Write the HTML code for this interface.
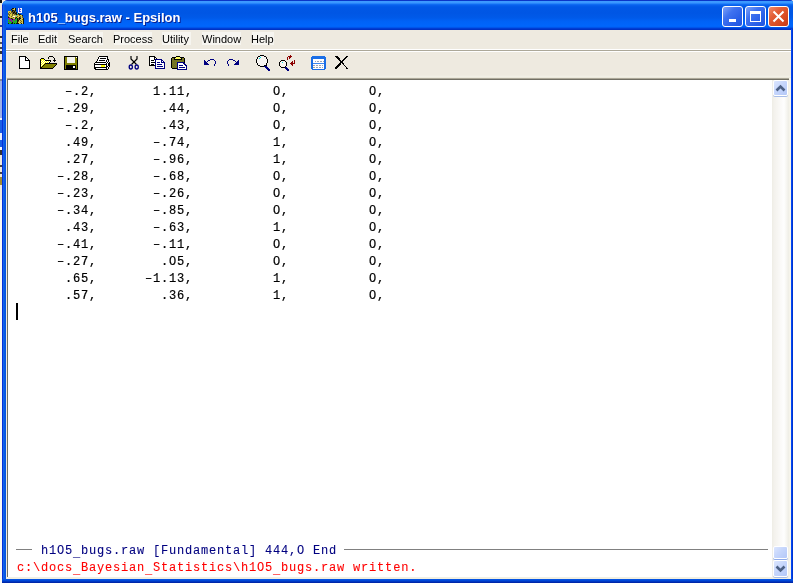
<!DOCTYPE html>
<html><head><meta charset="utf-8">
<style>
*{margin:0;padding:0;box-sizing:border-box}
html,body{width:793px;height:583px;overflow:hidden;background:#f2efe4;position:relative}
.a{position:absolute}
#desk{left:0;top:0;width:2px;height:583px;background:linear-gradient(180deg,#111 0px,#111 3px,#efe9dc 3px,#efe9dc 16px,#333 16px,#333 18px,#efe9dc 18px,#efe9dc 25px,#2040a0 25px,#2040a0 27px,#efe9dc 27px,#efe9dc 36px,#333 36px,#333 38px,#efe9dc 38px,#efe9dc 42px,#555 42px,#555 44px,#efe9dc 44px,#efe9dc 47px,#444 47px,#444 49px,#efe9dc 49px,#efe9dc 51px,#333 51px,#333 54px,#efe9dc 54px,#efe9dc 60px,#444 60px,#444 62px,#f2eee4 62px,#f2eee4 79px,#8088a0 79px,#8088a0 81px,#9cb0e8 81px,#9cb0e8 118px,#f8f8f8 118px,#f8f8f8 120px,#1a5fe6 120px,#1a5fe6 133px,#e8eefc 133px,#e8eefc 140px,#1a5fe6 140px,#1a5fe6 147px,#f8f8f8 147px,#f8f8f8 150px,#333 150px,#333 155px,#efe9dc 155px,#efe9dc 165px,#444 165px,#444 167px,#efe9dc 167px,#efe9dc 172px,#444 172px,#444 174px,#efe9dc 174px,#efe9dc 177px,#a08a30 177px,#a08a30 185px,#efe9dc 185px,#efe9dc 200px,#fafaf6 200px,#fafaf6 583px)}
#win{left:2px;top:0;width:794px;height:583px;background:#0054e3;border-radius:6px 7px 0 0}
#title{left:2px;top:0;width:794px;height:30px;border-radius:6px 7px 0 0;
 background:linear-gradient(180deg,#0a36c8 0px,#0a36c8 1px,#3d9bff 1px,#3a96ff 3px,#1474f6 4px,#0862ee 5px,#0058e6 7px,#0056e4 13px,#005ae9 18px,#0062f6 21px,#0066fc 26px,#0062f6 27px,#0048e0 28px,#0034c8 29px,#0030c0 30px)}
#ttext{left:28px;top:10px;font:bold 13px "Liberation Sans",sans-serif;color:#fff;text-shadow:1px 1px 0 #0a1f8f;white-space:nowrap}
#lb{left:2px;top:5px;width:4px;height:578px;background:linear-gradient(90deg,#0831d9 0,#0831d9 1px,#166aee 1px,#0855dd 3px,#0058ee 4px)}
#lcl{left:6px;top:30px;width:1px;height:549px;background:#eeeae0}
#bb{left:2px;top:579px;width:794px;height:4px;background:linear-gradient(180deg,#0855dd 0,#0050e6 1px,#0030b5 3px,#001ea0 4px)}
#rb{left:791px;top:29px;width:4px;height:554px;background:linear-gradient(90deg,#0048f4 0,#0048f4 1px,#0038d8 1px,#0030c8 2px,#00138c 4px)}
#menu{left:6px;top:30px;width:785px;height:19px;background:#eeeae0;font:11px "Liberation Sans",sans-serif;color:#000}
#mtext{left:6px;top:30px;width:785px;height:19px;font:11px "Liberation Sans",sans-serif;color:#000}
#mtext span{position:absolute;top:3px}
.mhl{top:32px;height:13px;background:#f6f5f0}
#sep{left:6px;top:49px;width:785px;height:3px;background:linear-gradient(180deg,#fff 0,#fff 1px,#aca899 1px,#aca899 2px,#fff 2px)}
#tool{left:6px;top:52px;width:785px;height:27px;background:linear-gradient(180deg,#eeeae0 0,#eeeae0 23px,#f3f1e8 25px,#e5e2d2 26px)}
#edtop{left:7px;top:78px;width:782px;height:2px;background:linear-gradient(180deg,#aca899 0,#aca899 1px,#716f64 1px,#716f64 2px)}
#edl2{left:7px;top:79px;width:1px;height:499px;background:#716f64}
#edit{left:8px;top:80px;width:764px;height:497px;background:#fff}
#botline{left:7px;top:577px;width:783px;height:2px;background:#f1efe2}
#rline{left:789px;top:78px;width:2px;height:501px;background:#f5f3ea}
pre{position:absolute;left:16.5px;top:84px;font:12px/17px "Liberation Mono",monospace;letter-spacing:0.8px;color:#000}
#cursor{left:16px;top:303px;width:2px;height:17px;background:#000}
.mono{font:12px/17px "Liberation Mono",monospace;letter-spacing:0.8px;white-space:pre}
#stat{left:16.5px;top:543px;color:#000080}
#msg{left:16.5px;top:560px;color:#ff0000}
#sl1{left:16px;top:549px;width:16px;height:1px;background:#808080}
#sl2{left:344px;top:549px;width:424px;height:1px;background:#808080}
#sb{left:772px;top:80px;width:17px;height:497px;background:linear-gradient(90deg,#eeede5 0,#f3f1ec 2px,#fefefe 12px,#f5f4ef 15px,#eeede5 17px)}
.sbtn{position:absolute;left:1px;width:15px;height:16px;border-radius:2px;border:1px solid #fff;background:linear-gradient(135deg,#dce6fe 0,#c6d6fc 45%,#b4c8f8 100%);box-shadow:0 1px 0 #a8bde8}
.tb{position:absolute;top:6px;width:21px;height:21px;border:1px solid #fff;border-radius:3px}
.mn{background:linear-gradient(135deg,#7fa3f8 0,#3f72f0 35%,#2a5fe8 70%,#1f55e0 100%)}
.cl{background:linear-gradient(135deg,#f08a6a 0,#e35d36 35%,#d84a22 70%,#c43a18 100%)}
svg{position:absolute;overflow:visible}
#ttext,#mtext,pre,.mono{will-change:transform}
pre{-webkit-text-stroke:0.2px currentColor}
.mono{-webkit-text-stroke:0.1px currentColor}
.u{position:relative;top:2px}
</style></head><body>
<div id="desk" class="a"></div>
<div id="win" class="a"></div>
<div id="title" class="a"></div>
<svg style="left:8px;top:8px" width="16" height="16" viewBox="0 0 16 16" shape-rendering="crispEdges"><rect x="4" y="0" width="2" height="1" fill="#141408"/><rect x="6" y="0" width="1" height="1" fill="#d8c848"/><rect x="7" y="0" width="1" height="1" fill="#141408"/><rect x="10" y="0" width="1" height="1" fill="#f4f4ff"/><rect x="11" y="0" width="1" height="1" fill="#5a4ad8"/><rect x="12" y="0" width="2" height="1" fill="#f4f4ff"/><rect x="3" y="1" width="1" height="1" fill="#141408"/><rect x="4" y="1" width="1" height="1" fill="#6e6028"/><rect x="5" y="1" width="2" height="1" fill="#d8c848"/><rect x="7" y="1" width="1" height="1" fill="#141408"/><rect x="10" y="1" width="1" height="1" fill="#f4f4ff"/><rect x="11" y="1" width="2" height="1" fill="#5a4ad8"/><rect x="13" y="1" width="1" height="1" fill="#f4f4ff"/><rect x="2" y="2" width="1" height="1" fill="#6e6028"/><rect x="4" y="2" width="2" height="1" fill="#141408"/><rect x="6" y="2" width="1" height="1" fill="#6e6028"/><rect x="7" y="2" width="1" height="1" fill="#141408"/><rect x="10" y="2" width="1" height="1" fill="#f4f4ff"/><rect x="11" y="2" width="1" height="1" fill="#5a4ad8"/><rect x="12" y="2" width="2" height="1" fill="#f4f4ff"/><rect x="0" y="3" width="3" height="1" fill="#d8c848"/><rect x="3" y="3" width="1" height="1" fill="#6e6028"/><rect x="4" y="3" width="1" height="1" fill="#141408"/><rect x="5" y="3" width="1" height="1" fill="#6e6028"/><rect x="6" y="3" width="1" height="1" fill="#141408"/><rect x="7" y="3" width="1" height="1" fill="#6e6028"/><rect x="10" y="3" width="1" height="1" fill="#f4f4ff"/><rect x="11" y="3" width="2" height="1" fill="#5a4ad8"/><rect x="13" y="3" width="1" height="1" fill="#f4f4ff"/><rect x="0" y="4" width="1" height="1" fill="#d8c848"/><rect x="1" y="4" width="1" height="1" fill="#6e6028"/><rect x="2" y="4" width="1" height="1" fill="#d8c848"/><rect x="3" y="4" width="2" height="1" fill="#6e6028"/><rect x="5" y="4" width="2" height="1" fill="#141408"/><rect x="7" y="4" width="1" height="1" fill="#6e6028"/><rect x="8" y="4" width="1" height="1" fill="#141408"/><rect x="10" y="4" width="4" height="1" fill="#f4f4ff"/><rect x="0" y="5" width="1" height="1" fill="#6e6028"/><rect x="1" y="5" width="1" height="1" fill="#d8c848"/><rect x="2" y="5" width="1" height="1" fill="#6e6028"/><rect x="3" y="5" width="1" height="1" fill="#d8c848"/><rect x="4" y="5" width="1" height="1" fill="#6e6028"/><rect x="5" y="5" width="1" height="1" fill="#141408"/><rect x="6" y="5" width="1" height="1" fill="#6e6028"/><rect x="7" y="5" width="2" height="1" fill="#141408"/><rect x="9" y="5" width="1" height="1" fill="#20d0d0"/><rect x="10" y="5" width="1" height="1" fill="#141408"/><rect x="0" y="6" width="2" height="1" fill="#6e6028"/><rect x="2" y="6" width="2" height="1" fill="#d8c848"/><rect x="4" y="6" width="1" height="1" fill="#6e6028"/><rect x="5" y="6" width="1" height="1" fill="#d8c848"/><rect x="6" y="6" width="2" height="1" fill="#6e6028"/><rect x="8" y="6" width="1" height="1" fill="#141408"/><rect x="9" y="6" width="2" height="1" fill="#6e6028"/><rect x="11" y="6" width="2" height="1" fill="#141408"/><rect x="0" y="7" width="1" height="1" fill="#d8c848"/><rect x="1" y="7" width="1" height="1" fill="#6e6028"/><rect x="2" y="7" width="2" height="1" fill="#d8c848"/><rect x="4" y="7" width="1" height="1" fill="#6e6028"/><rect x="5" y="7" width="3" height="1" fill="#d8c848"/><rect x="8" y="7" width="1" height="1" fill="#20d0d0"/><rect x="9" y="7" width="2" height="1" fill="#d8c848"/><rect x="11" y="7" width="1" height="1" fill="#6e6028"/><rect x="12" y="7" width="2" height="1" fill="#d8c848"/><rect x="14" y="7" width="1" height="1" fill="#141408"/><rect x="0" y="8" width="1" height="1" fill="#6e6028"/><rect x="1" y="8" width="2" height="1" fill="#d8c848"/><rect x="3" y="8" width="1" height="1" fill="#6e6028"/><rect x="4" y="8" width="1" height="1" fill="#d8c848"/><rect x="5" y="8" width="2" height="1" fill="#f4f4ff"/><rect x="7" y="8" width="2" height="1" fill="#d8c848"/><rect x="9" y="8" width="1" height="1" fill="#6e6028"/><rect x="10" y="8" width="2" height="1" fill="#d8c848"/><rect x="12" y="8" width="1" height="1" fill="#6e6028"/><rect x="13" y="8" width="1" height="1" fill="#d8c848"/><rect x="14" y="8" width="1" height="1" fill="#6e6028"/><rect x="0" y="9" width="1" height="1" fill="#141408"/><rect x="1" y="9" width="1" height="1" fill="#6e6028"/><rect x="2" y="9" width="3" height="1" fill="#d8c848"/><rect x="5" y="9" width="1" height="1" fill="#6e6028"/><rect x="6" y="9" width="1" height="1" fill="#d8c848"/><rect x="7" y="9" width="1" height="1" fill="#6e6028"/><rect x="8" y="9" width="1" height="1" fill="#141408"/><rect x="9" y="9" width="2" height="1" fill="#d8c848"/><rect x="11" y="9" width="1" height="1" fill="#141408"/><rect x="12" y="9" width="1" height="1" fill="#6e6028"/><rect x="13" y="9" width="1" height="1" fill="#d8c848"/><rect x="14" y="9" width="1" height="1" fill="#6e6028"/><rect x="0" y="10" width="2" height="1" fill="#8a1a9a"/><rect x="2" y="10" width="1" height="1" fill="#6e6028"/><rect x="3" y="10" width="1" height="1" fill="#141408"/><rect x="4" y="10" width="1" height="1" fill="#6e6028"/><rect x="5" y="10" width="2" height="1" fill="#d8c848"/><rect x="7" y="10" width="1" height="1" fill="#141408"/><rect x="8" y="10" width="1" height="1" fill="#22b022"/><rect x="9" y="10" width="1" height="1" fill="#141408"/><rect x="10" y="10" width="1" height="1" fill="#6e6028"/><rect x="11" y="10" width="2" height="1" fill="#141408"/><rect x="13" y="10" width="2" height="1" fill="#d8c848"/><rect x="15" y="10" width="1" height="1" fill="#141408"/><rect x="0" y="11" width="1" height="1" fill="#22b022"/><rect x="1" y="11" width="3" height="1" fill="#8a1a9a"/><rect x="4" y="11" width="1" height="1" fill="#141408"/><rect x="5" y="11" width="2" height="1" fill="#8a1a9a"/><rect x="7" y="11" width="2" height="1" fill="#22b022"/><rect x="9" y="11" width="1" height="1" fill="#141408"/><rect x="10" y="11" width="1" height="1" fill="#6e6028"/><rect x="11" y="11" width="1" height="1" fill="#141408"/><rect x="12" y="11" width="2" height="1" fill="#d8c848"/><rect x="14" y="11" width="1" height="1" fill="#6e6028"/><rect x="15" y="11" width="1" height="1" fill="#141408"/><rect x="0" y="12" width="2" height="1" fill="#22b022"/><rect x="2" y="12" width="2" height="1" fill="#8a1a9a"/><rect x="4" y="12" width="2" height="1" fill="#22b022"/><rect x="6" y="12" width="1" height="1" fill="#8a1a9a"/><rect x="7" y="12" width="2" height="1" fill="#22b022"/><rect x="9" y="12" width="2" height="1" fill="#141408"/><rect x="11" y="12" width="1" height="1" fill="#d8c848"/><rect x="12" y="12" width="1" height="1" fill="#6e6028"/><rect x="13" y="12" width="2" height="1" fill="#d8c848"/><rect x="15" y="12" width="1" height="1" fill="#141408"/><rect x="0" y="13" width="1" height="1" fill="#22b022"/><rect x="1" y="13" width="1" height="1" fill="#8a1a9a"/><rect x="2" y="13" width="1" height="1" fill="#22b022"/><rect x="3" y="13" width="2" height="1" fill="#8a1a9a"/><rect x="5" y="13" width="4" height="1" fill="#22b022"/><rect x="9" y="13" width="1" height="1" fill="#141408"/><rect x="10" y="13" width="1" height="1" fill="#6e6028"/><rect x="11" y="13" width="2" height="1" fill="#d8c848"/><rect x="13" y="13" width="1" height="1" fill="#6e6028"/><rect x="14" y="13" width="1" height="1" fill="#d8c848"/><rect x="15" y="13" width="1" height="1" fill="#141408"/><rect x="0" y="14" width="4" height="1" fill="#22b022"/><rect x="4" y="14" width="1" height="1" fill="#141408"/><rect x="5" y="14" width="4" height="1" fill="#22b022"/><rect x="9" y="14" width="1" height="1" fill="#141408"/><rect x="10" y="14" width="2" height="1" fill="#d8c848"/><rect x="12" y="14" width="1" height="1" fill="#6e6028"/><rect x="13" y="14" width="2" height="1" fill="#d8c848"/><rect x="15" y="14" width="1" height="1" fill="#141408"/><rect x="0" y="15" width="1" height="1" fill="#141408"/><rect x="1" y="15" width="2" height="1" fill="#22b022"/><rect x="3" y="15" width="2" height="1" fill="#141408"/><rect x="5" y="15" width="1" height="1" fill="#22b022"/><rect x="6" y="15" width="1" height="1" fill="#141408"/><rect x="7" y="15" width="1" height="1" fill="#22b022"/><rect x="8" y="15" width="3" height="1" fill="#141408"/><rect x="11" y="15" width="2" height="1" fill="#d8c848"/><rect x="13" y="15" width="1" height="1" fill="#141408"/><rect x="14" y="15" width="1" height="1" fill="#d8c848"/><rect x="15" y="15" width="1" height="1" fill="#141408"/></svg>
<div id="ttext" class="a">h105_bugs.raw - Epsilon</div>
<div class="tb mn a" style="left:722px"><div class="a" style="left:6px;top:12px;width:7px;height:3px;background:#fff"></div></div>
<div class="tb mn a" style="left:745px"><div class="a" style="left:4px;top:4px;width:11px;height:11px;border:1px solid #fff;border-top:3px solid #fff"></div></div>
<div class="tb cl a" style="left:768px"><svg style="left:0;top:0" width="19" height="19" viewBox="0 0 19 19"><path d="M4.5 4.5L14.5 14.5M14.5 4.5L4.5 14.5" stroke="#fff" stroke-width="2"/></svg></div>
<div id="lb" class="a"></div>
<div id="lcl" class="a"></div>
<div id="rb" class="a"></div>
<div id="bb" class="a"></div>
<div id="menu" class="a"></div>
<div class="a mhl" style="left:11px;width:18px"></div><div class="a mhl" style="left:39px;width:19px"></div><div class="a mhl" style="left:69px;width:34px"></div><div class="a mhl" style="left:114px;width:38px"></div><div class="a mhl" style="left:162px;width:29px"></div><div class="a mhl" style="left:202px;width:39px"></div><div class="a mhl" style="left:252px;width:22px"></div>
<div id="mtext" class="a">
 <span style="left:5px">File</span><span style="left:32px">Edit</span><span style="left:62px">Search</span><span style="left:107px">Process</span><span style="left:156px">Utility</span><span style="left:196px">Window</span><span style="left:245px">Help</span>
</div>
<div id="sep" class="a"></div>
<div id="tool" class="a"></div>
<!-- toolbar icons -->
<svg style="left:0;top:0" width="793" height="80" viewBox="0 0 793 80" shape-rendering="crispEdges">
 <!-- new --><rect x="19" y="56" width="7" height="1" fill="#000"/><rect x="19" y="57" width="1" height="1" fill="#000"/><rect x="20" y="57" width="5" height="1" fill="#fff"/><rect x="25" y="57" width="2" height="1" fill="#000"/><rect x="19" y="58" width="1" height="1" fill="#000"/><rect x="20" y="58" width="5" height="1" fill="#fff"/><rect x="25" y="58" width="1" height="1" fill="#000"/><rect x="26" y="58" width="1" height="1" fill="#fff"/><rect x="27" y="58" width="1" height="1" fill="#000"/><rect x="19" y="59" width="1" height="1" fill="#000"/><rect x="20" y="59" width="5" height="1" fill="#fff"/><rect x="25" y="59" width="1" height="1" fill="#000"/><rect x="26" y="59" width="2" height="1" fill="#fff"/><rect x="28" y="59" width="1" height="1" fill="#000"/><rect x="19" y="60" width="1" height="1" fill="#000"/><rect x="20" y="60" width="5" height="1" fill="#fff"/><rect x="25" y="60" width="5" height="1" fill="#000"/><rect x="19" y="61" width="1" height="1" fill="#000"/><rect x="20" y="61" width="9" height="1" fill="#fff"/><rect x="29" y="61" width="1" height="1" fill="#000"/><rect x="19" y="62" width="1" height="1" fill="#000"/><rect x="20" y="62" width="9" height="1" fill="#fff"/><rect x="29" y="62" width="1" height="1" fill="#000"/><rect x="19" y="63" width="1" height="1" fill="#000"/><rect x="20" y="63" width="9" height="1" fill="#fff"/><rect x="29" y="63" width="1" height="1" fill="#000"/><rect x="19" y="64" width="1" height="1" fill="#000"/><rect x="20" y="64" width="9" height="1" fill="#fff"/><rect x="29" y="64" width="1" height="1" fill="#000"/><rect x="19" y="65" width="1" height="1" fill="#000"/><rect x="20" y="65" width="9" height="1" fill="#fff"/><rect x="29" y="65" width="1" height="1" fill="#000"/><rect x="19" y="66" width="1" height="1" fill="#000"/><rect x="20" y="66" width="9" height="1" fill="#fff"/><rect x="29" y="66" width="1" height="1" fill="#000"/><rect x="19" y="67" width="1" height="1" fill="#000"/><rect x="20" y="67" width="9" height="1" fill="#fff"/><rect x="29" y="67" width="1" height="1" fill="#000"/><rect x="19" y="68" width="11" height="1" fill="#000"/>
 <!-- open --><rect x="49" y="56" width="4" height="1" fill="#000"/><rect x="48" y="57" width="1" height="1" fill="#000"/><rect x="53" y="57" width="1" height="1" fill="#000"/><rect x="41" y="58" width="3" height="1" fill="#000"/><rect x="48" y="58" width="1" height="1" fill="#000"/><rect x="54" y="58" width="1" height="1" fill="#000"/><rect x="40" y="59" width="1" height="1" fill="#000"/><rect x="41" y="59" width="3" height="1" fill="#ffff00"/><rect x="44" y="59" width="1" height="1" fill="#000"/><rect x="54" y="59" width="1" height="1" fill="#000"/><rect x="40" y="60" width="1" height="1" fill="#000"/><rect x="41" y="60" width="1" height="1" fill="#ffff00"/><rect x="42" y="60" width="1" height="1" fill="#fff"/><rect x="43" y="60" width="1" height="1" fill="#ffff00"/><rect x="44" y="60" width="1" height="1" fill="#fff"/><rect x="45" y="60" width="6" height="1" fill="#000"/><rect x="53" y="60" width="3" height="1" fill="#000"/><rect x="40" y="61" width="1" height="1" fill="#000"/><rect x="41" y="61" width="1" height="1" fill="#fff"/><rect x="42" y="61" width="1" height="1" fill="#ffff00"/><rect x="43" y="61" width="1" height="1" fill="#fff"/><rect x="44" y="61" width="1" height="1" fill="#ffff00"/><rect x="45" y="61" width="1" height="1" fill="#fff"/><rect x="46" y="61" width="1" height="1" fill="#ffff00"/><rect x="47" y="61" width="1" height="1" fill="#fff"/><rect x="48" y="61" width="1" height="1" fill="#ffff00"/><rect x="49" y="61" width="1" height="1" fill="#fff"/><rect x="50" y="61" width="1" height="1" fill="#000"/><rect x="54" y="61" width="1" height="1" fill="#000"/><rect x="40" y="62" width="1" height="1" fill="#000"/><rect x="41" y="62" width="1" height="1" fill="#ffff00"/><rect x="42" y="62" width="1" height="1" fill="#fff"/><rect x="43" y="62" width="1" height="1" fill="#ffff00"/><rect x="44" y="62" width="1" height="1" fill="#fff"/><rect x="45" y="62" width="1" height="1" fill="#ffff00"/><rect x="46" y="62" width="1" height="1" fill="#fff"/><rect x="47" y="62" width="1" height="1" fill="#ffff00"/><rect x="48" y="62" width="1" height="1" fill="#fff"/><rect x="49" y="62" width="1" height="1" fill="#000"/><rect x="40" y="63" width="1" height="1" fill="#000"/><rect x="41" y="63" width="1" height="1" fill="#fff"/><rect x="42" y="63" width="1" height="1" fill="#ffff00"/><rect x="43" y="63" width="1" height="1" fill="#fff"/><rect x="44" y="63" width="1" height="1" fill="#ffff00"/><rect x="45" y="63" width="12" height="1" fill="#000"/><rect x="40" y="64" width="1" height="1" fill="#000"/><rect x="41" y="64" width="1" height="1" fill="#ffff00"/><rect x="42" y="64" width="1" height="1" fill="#fff"/><rect x="43" y="64" width="1" height="1" fill="#ffff00"/><rect x="44" y="64" width="1" height="1" fill="#000"/><rect x="45" y="64" width="11" height="1" fill="#808000"/><rect x="56" y="64" width="1" height="1" fill="#000"/><rect x="40" y="65" width="1" height="1" fill="#000"/><rect x="41" y="65" width="1" height="1" fill="#fff"/><rect x="42" y="65" width="1" height="1" fill="#ffff00"/><rect x="43" y="65" width="1" height="1" fill="#000"/><rect x="44" y="65" width="11" height="1" fill="#808000"/><rect x="55" y="65" width="1" height="1" fill="#000"/><rect x="40" y="66" width="1" height="1" fill="#000"/><rect x="41" y="66" width="1" height="1" fill="#ffff00"/><rect x="42" y="66" width="1" height="1" fill="#000"/><rect x="43" y="66" width="11" height="1" fill="#808000"/><rect x="54" y="66" width="1" height="1" fill="#000"/><rect x="40" y="67" width="2" height="1" fill="#000"/><rect x="42" y="67" width="11" height="1" fill="#808000"/><rect x="53" y="67" width="1" height="1" fill="#000"/><rect x="40" y="68" width="13" height="1" fill="#000"/>
 <!-- save -->
 <rect x="64.5" y="56.5" width="13" height="13" fill="#808000" stroke="#000"/>
 <rect x="67" y="57" width="8" height="6" fill="#f4f4ec"/>
 <rect x="66" y="65" width="10" height="4" fill="#000"/>
 <rect x="73" y="66" width="2" height="2" fill="#fff"/><rect x="76" y="57" width="1" height="1" fill="#fff"/>
 <!-- print --> <rect x="99" y="56" width="9" height="1" fill="#000"/> <rect x="98" y="57" width="1" height="1" fill="#000"/> <rect x="99" y="57" width="8" height="1" fill="#fff"/> <rect x="107" y="57" width="1" height="1" fill="#000"/> <rect x="98" y="58" width="1" height="1" fill="#000"/> <rect x="99" y="58" width="1" height="1" fill="#fff"/> <rect x="100" y="58" width="6" height="1" fill="#000"/> <rect x="106" y="58" width="1" height="1" fill="#fff"/> <rect x="107" y="58" width="1" height="1" fill="#000"/> <rect x="97" y="59" width="1" height="1" fill="#000"/> <rect x="98" y="59" width="9" height="1" fill="#fff"/> <rect x="107" y="59" width="2" height="1" fill="#000"/> <rect x="97" y="60" width="1" height="1" fill="#000"/> <rect x="98" y="60" width="1" height="1" fill="#fff"/> <rect x="99" y="60" width="6" height="1" fill="#000"/> <rect x="105" y="60" width="1" height="1" fill="#fff"/> <rect x="106" y="60" width="1" height="1" fill="#000"/> <rect x="107" y="60" width="1" height="1" fill="#fff"/> <rect x="108" y="60" width="1" height="1" fill="#000"/> <rect x="96" y="61" width="1" height="1" fill="#000"/> <rect x="97" y="61" width="9" height="1" fill="#fff"/> <rect x="106" y="61" width="1" height="1" fill="#000"/> <rect x="107" y="61" width="1" height="1" fill="#fff"/> <rect x="108" y="61" width="1" height="1" fill="#000"/> <rect x="109" y="61" width="1" height="1" fill="#fff"/> <rect x="95" y="62" width="11" height="1" fill="#000"/> <rect x="106" y="62" width="1" height="1" fill="#fff"/> <rect x="107" y="62" width="1" height="1" fill="#000"/> <rect x="108" y="62" width="1" height="1" fill="#fff"/> <rect x="109" y="62" width="1" height="1" fill="#000"/> <rect x="94" y="63" width="1" height="1" fill="#000"/> <rect x="95" y="63" width="11" height="1" fill="#fff"/> <rect x="106" y="63" width="1" height="1" fill="#000"/> <rect x="107" y="63" width="1" height="1" fill="#fff"/> <rect x="108" y="63" width="2" height="1" fill="#000"/> <rect x="94" y="64" width="13" height="1" fill="#000"/> <rect x="107" y="64" width="1" height="1" fill="#fff"/> <rect x="108" y="64" width="2" height="1" fill="#000"/> <rect x="94" y="65" width="1" height="1" fill="#000"/> <rect x="95" y="65" width="6" height="1" fill="#fff"/> <rect x="101" y="65" width="4" height="1" fill="#ffff00"/> <rect x="105" y="65" width="1" height="1" fill="#fff"/> <rect x="106" y="65" width="1" height="1" fill="#000"/> <rect x="107" y="65" width="1" height="1" fill="#fff"/> <rect x="108" y="65" width="2" height="1" fill="#000"/> <rect x="94" y="66" width="1" height="1" fill="#000"/> <rect x="95" y="66" width="6" height="1" fill="#fff"/> <rect x="101" y="66" width="4" height="1" fill="#ffff00"/> <rect x="105" y="66" width="1" height="1" fill="#fff"/> <rect x="106" y="66" width="2" height="1" fill="#000"/> <rect x="108" y="66" width="1" height="1" fill="#fff"/> <rect x="109" y="66" width="1" height="1" fill="#000"/> <rect x="94" y="67" width="13" height="1" fill="#000"/> <rect x="107" y="67" width="1" height="1" fill="#fff"/> <rect x="108" y="67" width="1" height="1" fill="#000"/> <rect x="94" y="68" width="2" height="1" fill="#000"/> <rect x="96" y="68" width="10" height="1" fill="#fff"/> <rect x="106" y="68" width="1" height="1" fill="#000"/> <rect x="107" y="68" width="1" height="1" fill="#fff"/> <rect x="108" y="68" width="1" height="1" fill="#000"/> <rect x="95" y="69" width="13" height="1" fill="#000"/>
 <!-- cut -->
 <path d="M131 56V59L136.5 64.5M137 56V59L131.5 64.5" fill="none" stroke="#000" stroke-width="1.2" shape-rendering="auto"/>
 <ellipse cx="130.8" cy="67" rx="1.6" ry="2" fill="none" stroke="#000080" stroke-width="1.3" shape-rendering="auto"/>
 <ellipse cx="136.7" cy="67" rx="1.6" ry="2" fill="none" stroke="#000080" stroke-width="1.3" shape-rendering="auto"/>
 <!-- copy --><rect x="149" y="56" width="6" height="1" fill="#000"/><rect x="149" y="57" width="1" height="1" fill="#000"/><rect x="150" y="57" width="4" height="1" fill="#fff"/><rect x="154" y="57" width="2" height="1" fill="#000"/><rect x="149" y="58" width="1" height="1" fill="#000"/><rect x="150" y="58" width="4" height="1" fill="#fff"/><rect x="154" y="58" width="1" height="1" fill="#000"/><rect x="155" y="58" width="1" height="1" fill="#fff"/><rect x="156" y="58" width="1" height="1" fill="#000"/><rect x="149" y="59" width="1" height="1" fill="#000"/><rect x="150" y="59" width="4" height="1" fill="#fff"/><rect x="154" y="59" width="1" height="1" fill="#000"/><rect x="155" y="59" width="7" height="1" fill="#000080"/><rect x="149" y="60" width="1" height="1" fill="#000"/><rect x="150" y="60" width="1" height="1" fill="#fff"/><rect x="151" y="60" width="3" height="1" fill="#000"/><rect x="154" y="60" width="1" height="1" fill="#fff"/><rect x="155" y="60" width="1" height="1" fill="#000080"/><rect x="156" y="60" width="5" height="1" fill="#fff"/><rect x="161" y="60" width="2" height="1" fill="#000080"/><rect x="149" y="61" width="1" height="1" fill="#000"/><rect x="150" y="61" width="5" height="1" fill="#fff"/><rect x="155" y="61" width="1" height="1" fill="#000080"/><rect x="156" y="61" width="5" height="1" fill="#fff"/><rect x="161" y="61" width="1" height="1" fill="#000080"/><rect x="162" y="61" width="1" height="1" fill="#fff"/><rect x="163" y="61" width="1" height="1" fill="#000080"/><rect x="149" y="62" width="1" height="1" fill="#000"/><rect x="150" y="62" width="1" height="1" fill="#fff"/><rect x="151" y="62" width="4" height="1" fill="#000"/><rect x="155" y="62" width="1" height="1" fill="#000080"/><rect x="156" y="62" width="1" height="1" fill="#fff"/><rect x="157" y="62" width="3" height="1" fill="#000080"/><rect x="160" y="62" width="1" height="1" fill="#fff"/><rect x="161" y="62" width="4" height="1" fill="#000080"/><rect x="149" y="63" width="1" height="1" fill="#000"/><rect x="150" y="63" width="5" height="1" fill="#fff"/><rect x="155" y="63" width="1" height="1" fill="#000080"/><rect x="156" y="63" width="8" height="1" fill="#fff"/><rect x="164" y="63" width="1" height="1" fill="#000080"/><rect x="149" y="64" width="1" height="1" fill="#000"/><rect x="150" y="64" width="1" height="1" fill="#fff"/><rect x="151" y="64" width="3" height="1" fill="#000"/><rect x="154" y="64" width="1" height="1" fill="#fff"/><rect x="155" y="64" width="1" height="1" fill="#000080"/><rect x="156" y="64" width="1" height="1" fill="#fff"/><rect x="157" y="64" width="5" height="1" fill="#000080"/><rect x="162" y="64" width="2" height="1" fill="#fff"/><rect x="164" y="64" width="1" height="1" fill="#000080"/><rect x="149" y="65" width="6" height="1" fill="#000"/><rect x="155" y="65" width="1" height="1" fill="#000080"/><rect x="156" y="65" width="8" height="1" fill="#fff"/><rect x="164" y="65" width="1" height="1" fill="#000080"/><rect x="155" y="66" width="1" height="1" fill="#000080"/><rect x="156" y="66" width="1" height="1" fill="#fff"/><rect x="157" y="66" width="6" height="1" fill="#000080"/><rect x="163" y="66" width="1" height="1" fill="#fff"/><rect x="164" y="66" width="1" height="1" fill="#000080"/><rect x="155" y="67" width="1" height="1" fill="#000080"/><rect x="156" y="67" width="8" height="1" fill="#fff"/><rect x="164" y="67" width="1" height="1" fill="#000080"/><rect x="155" y="68" width="10" height="1" fill="#000080"/>
 <!-- paste --><rect x="176" y="56" width="4" height="1" fill="#000"/><rect x="172" y="57" width="4" height="1" fill="#000"/><rect x="176" y="57" width="4" height="1" fill="#ffff60"/><rect x="180" y="57" width="4" height="1" fill="#000"/><rect x="171" y="58" width="1" height="1" fill="#000"/><rect x="172" y="58" width="1" height="1" fill="#6a6a4a"/><rect x="173" y="58" width="1" height="1" fill="#808000"/><rect x="174" y="58" width="1" height="1" fill="#000"/><rect x="175" y="58" width="6" height="1" fill="#ffff60"/><rect x="181" y="58" width="1" height="1" fill="#000"/><rect x="182" y="58" width="1" height="1" fill="#6a6a4a"/><rect x="183" y="58" width="1" height="1" fill="#808000"/><rect x="184" y="58" width="1" height="1" fill="#000"/><rect x="171" y="59" width="1" height="1" fill="#000"/><rect x="172" y="59" width="1" height="1" fill="#808000"/><rect x="173" y="59" width="1" height="1" fill="#6a6a4a"/><rect x="174" y="59" width="8" height="1" fill="#000"/><rect x="182" y="59" width="1" height="1" fill="#808000"/><rect x="183" y="59" width="1" height="1" fill="#6a6a4a"/><rect x="184" y="59" width="1" height="1" fill="#000"/><rect x="171" y="60" width="1" height="1" fill="#000"/><rect x="172" y="60" width="1" height="1" fill="#6a6a4a"/><rect x="173" y="60" width="1" height="1" fill="#808000"/><rect x="174" y="60" width="1" height="1" fill="#6a6a4a"/><rect x="175" y="60" width="1" height="1" fill="#808000"/><rect x="176" y="60" width="1" height="1" fill="#6a6a4a"/><rect x="177" y="60" width="1" height="1" fill="#808000"/><rect x="178" y="60" width="1" height="1" fill="#6a6a4a"/><rect x="179" y="60" width="1" height="1" fill="#808000"/><rect x="180" y="60" width="1" height="1" fill="#6a6a4a"/><rect x="181" y="60" width="1" height="1" fill="#808000"/><rect x="182" y="60" width="1" height="1" fill="#6a6a4a"/><rect x="183" y="60" width="1" height="1" fill="#808000"/><rect x="184" y="60" width="1" height="1" fill="#000"/><rect x="171" y="61" width="1" height="1" fill="#000"/><rect x="172" y="61" width="1" height="1" fill="#808000"/><rect x="173" y="61" width="1" height="1" fill="#6a6a4a"/><rect x="174" y="61" width="1" height="1" fill="#808000"/><rect x="175" y="61" width="1" height="1" fill="#6a6a4a"/><rect x="176" y="61" width="1" height="1" fill="#808000"/><rect x="177" y="61" width="1" height="1" fill="#6a6a4a"/><rect x="178" y="61" width="1" height="1" fill="#808000"/><rect x="179" y="61" width="1" height="1" fill="#6a6a4a"/><rect x="180" y="61" width="1" height="1" fill="#808000"/><rect x="181" y="61" width="1" height="1" fill="#6a6a4a"/><rect x="182" y="61" width="1" height="1" fill="#808000"/><rect x="183" y="61" width="1" height="1" fill="#6a6a4a"/><rect x="184" y="61" width="1" height="1" fill="#000"/><rect x="171" y="62" width="1" height="1" fill="#000"/><rect x="172" y="62" width="1" height="1" fill="#6a6a4a"/><rect x="173" y="62" width="1" height="1" fill="#808000"/><rect x="174" y="62" width="1" height="1" fill="#6a6a4a"/><rect x="175" y="62" width="1" height="1" fill="#808000"/><rect x="176" y="62" width="1" height="1" fill="#6a6a4a"/><rect x="177" y="62" width="7" height="1" fill="#000080"/><rect x="184" y="62" width="1" height="1" fill="#000"/><rect x="171" y="63" width="1" height="1" fill="#000"/><rect x="172" y="63" width="1" height="1" fill="#808000"/><rect x="173" y="63" width="1" height="1" fill="#6a6a4a"/><rect x="174" y="63" width="1" height="1" fill="#808000"/><rect x="175" y="63" width="1" height="1" fill="#6a6a4a"/><rect x="176" y="63" width="1" height="1" fill="#808000"/><rect x="177" y="63" width="1" height="1" fill="#000080"/><rect x="178" y="63" width="5" height="1" fill="#fff"/><rect x="183" y="63" width="2" height="1" fill="#000080"/><rect x="171" y="64" width="1" height="1" fill="#000"/><rect x="172" y="64" width="1" height="1" fill="#6a6a4a"/><rect x="173" y="64" width="1" height="1" fill="#808000"/><rect x="174" y="64" width="1" height="1" fill="#6a6a4a"/><rect x="175" y="64" width="1" height="1" fill="#808000"/><rect x="176" y="64" width="1" height="1" fill="#6a6a4a"/><rect x="177" y="64" width="1" height="1" fill="#000080"/><rect x="178" y="64" width="6" height="1" fill="#fff"/><rect x="184" y="64" width="2" height="1" fill="#000080"/><rect x="171" y="65" width="1" height="1" fill="#000"/><rect x="172" y="65" width="1" height="1" fill="#808000"/><rect x="173" y="65" width="1" height="1" fill="#6a6a4a"/><rect x="174" y="65" width="1" height="1" fill="#808000"/><rect x="175" y="65" width="1" height="1" fill="#6a6a4a"/><rect x="176" y="65" width="1" height="1" fill="#808000"/><rect x="177" y="65" width="1" height="1" fill="#000080"/><rect x="178" y="65" width="1" height="1" fill="#fff"/><rect x="179" y="65" width="4" height="1" fill="#000080"/><rect x="183" y="65" width="2" height="1" fill="#fff"/><rect x="185" y="65" width="2" height="1" fill="#000080"/><rect x="171" y="66" width="1" height="1" fill="#000"/><rect x="172" y="66" width="1" height="1" fill="#6a6a4a"/><rect x="173" y="66" width="1" height="1" fill="#808000"/><rect x="174" y="66" width="1" height="1" fill="#6a6a4a"/><rect x="175" y="66" width="1" height="1" fill="#808000"/><rect x="176" y="66" width="1" height="1" fill="#6a6a4a"/><rect x="177" y="66" width="1" height="1" fill="#000080"/><rect x="178" y="66" width="8" height="1" fill="#fff"/><rect x="186" y="66" width="1" height="1" fill="#000080"/><rect x="171" y="67" width="1" height="1" fill="#000"/><rect x="172" y="67" width="1" height="1" fill="#808000"/><rect x="173" y="67" width="1" height="1" fill="#6a6a4a"/><rect x="174" y="67" width="1" height="1" fill="#808000"/><rect x="175" y="67" width="1" height="1" fill="#6a6a4a"/><rect x="176" y="67" width="1" height="1" fill="#808000"/><rect x="177" y="67" width="1" height="1" fill="#000080"/><rect x="178" y="67" width="1" height="1" fill="#fff"/><rect x="179" y="67" width="6" height="1" fill="#000080"/><rect x="185" y="67" width="1" height="1" fill="#fff"/><rect x="186" y="67" width="1" height="1" fill="#000080"/><rect x="172" y="68" width="5" height="1" fill="#000"/><rect x="177" y="68" width="1" height="1" fill="#000080"/><rect x="178" y="68" width="8" height="1" fill="#fff"/><rect x="186" y="68" width="1" height="1" fill="#000080"/><rect x="177" y="69" width="10" height="1" fill="#000080"/>
 <!-- undo --><rect x="210" y="59" width="4" height="1" fill="#000080"/><rect x="204" y="60" width="1" height="1" fill="#000080"/><rect x="208" y="60" width="2" height="1" fill="#000080"/><rect x="214" y="60" width="1" height="1" fill="#000080"/><rect x="204" y="61" width="2" height="1" fill="#000080"/><rect x="207" y="61" width="1" height="1" fill="#000080"/><rect x="215" y="61" width="1" height="1" fill="#000080"/><rect x="204" y="62" width="3" height="1" fill="#000080"/><rect x="215" y="62" width="1" height="1" fill="#000080"/><rect x="204" y="63" width="4" height="1" fill="#000080"/><rect x="215" y="63" width="1" height="1" fill="#000080"/><rect x="204" y="64" width="5" height="1" fill="#000080"/><rect x="214" y="64" width="1" height="1" fill="#000080"/><rect x="214" y="65" width="1" height="1" fill="#000080"/>
 <!-- redo --><rect x="229" y="59" width="4" height="1" fill="#000080"/><rect x="228" y="60" width="1" height="1" fill="#000080"/><rect x="233" y="60" width="2" height="1" fill="#000080"/><rect x="238" y="60" width="1" height="1" fill="#000080"/><rect x="227" y="61" width="1" height="1" fill="#000080"/><rect x="235" y="61" width="1" height="1" fill="#000080"/><rect x="237" y="61" width="2" height="1" fill="#000080"/><rect x="227" y="62" width="1" height="1" fill="#000080"/><rect x="236" y="62" width="3" height="1" fill="#000080"/><rect x="227" y="63" width="1" height="1" fill="#000080"/><rect x="235" y="63" width="4" height="1" fill="#000080"/><rect x="228" y="64" width="1" height="1" fill="#000080"/><rect x="234" y="64" width="5" height="1" fill="#000080"/><rect x="228" y="65" width="1" height="1" fill="#000080"/>
 <!-- find --><rect x="260" y="55" width="4" height="1" fill="#000"/><rect x="258" y="56" width="2" height="1" fill="#000"/><rect x="260" y="56" width="4" height="1" fill="#f7f5f2"/><rect x="264" y="56" width="2" height="1" fill="#000"/><rect x="257" y="57" width="1" height="1" fill="#000"/><rect x="258" y="57" width="2" height="1" fill="#f7f5f2"/><rect x="260" y="57" width="1" height="1" fill="#00e0e0"/><rect x="261" y="57" width="5" height="1" fill="#f7f5f2"/><rect x="266" y="57" width="1" height="1" fill="#000"/><rect x="257" y="58" width="1" height="1" fill="#000"/><rect x="258" y="58" width="1" height="1" fill="#f7f5f2"/><rect x="259" y="58" width="1" height="1" fill="#00e0e0"/><rect x="260" y="58" width="6" height="1" fill="#f7f5f2"/><rect x="266" y="58" width="1" height="1" fill="#000"/><rect x="256" y="59" width="1" height="1" fill="#000"/><rect x="257" y="59" width="10" height="1" fill="#f7f5f2"/><rect x="267" y="59" width="1" height="1" fill="#000"/><rect x="256" y="60" width="1" height="1" fill="#000"/><rect x="257" y="60" width="10" height="1" fill="#f7f5f2"/><rect x="267" y="60" width="1" height="1" fill="#000"/><rect x="256" y="61" width="1" height="1" fill="#000"/><rect x="257" y="61" width="10" height="1" fill="#f7f5f2"/><rect x="267" y="61" width="1" height="1" fill="#000"/><rect x="256" y="62" width="1" height="1" fill="#000"/><rect x="257" y="62" width="10" height="1" fill="#f7f5f2"/><rect x="267" y="62" width="1" height="1" fill="#000"/><rect x="257" y="63" width="1" height="1" fill="#000"/><rect x="258" y="63" width="8" height="1" fill="#f7f5f2"/><rect x="266" y="63" width="1" height="1" fill="#000"/><rect x="257" y="64" width="1" height="1" fill="#000"/><rect x="258" y="64" width="8" height="1" fill="#f7f5f2"/><rect x="266" y="64" width="1" height="1" fill="#000"/><rect x="258" y="65" width="2" height="1" fill="#000"/><rect x="260" y="65" width="4" height="1" fill="#f7f5f2"/><rect x="264" y="65" width="3" height="1" fill="#000"/><rect x="260" y="66" width="4" height="1" fill="#000"/><rect x="264" y="66" width="3" height="1" fill="#000080"/><rect x="265" y="67" width="3" height="1" fill="#000080"/><rect x="266" y="68" width="3" height="1" fill="#000080"/><rect x="267" y="69" width="3" height="1" fill="#000080"/><rect x="268" y="70" width="2" height="1" fill="#000080"/>
 <!-- replace --><rect x="290" y="55" width="1" height="1" fill="#8b0000"/><rect x="288" y="56" width="4" height="1" fill="#8b0000"/><rect x="287" y="57" width="1" height="1" fill="#8b0000"/><rect x="289" y="57" width="2" height="1" fill="#8b0000"/><rect x="287" y="58" width="1" height="1" fill="#8b0000"/><rect x="289" y="58" width="1" height="1" fill="#8b0000"/><rect x="287" y="59" width="1" height="1" fill="#8b0000"/><rect x="281" y="60" width="4" height="1" fill="#000"/><rect x="294" y="60" width="1" height="1" fill="#8b0000"/><rect x="280" y="61" width="1" height="1" fill="#000"/><rect x="281" y="61" width="4" height="1" fill="#f7f5f2"/><rect x="285" y="61" width="1" height="1" fill="#000"/><rect x="292" y="61" width="1" height="1" fill="#8b0000"/><rect x="294" y="61" width="1" height="1" fill="#8b0000"/><rect x="279" y="62" width="1" height="1" fill="#000"/><rect x="280" y="62" width="2" height="1" fill="#f7f5f2"/><rect x="282" y="62" width="1" height="1" fill="#00e0e0"/><rect x="283" y="62" width="3" height="1" fill="#f7f5f2"/><rect x="286" y="62" width="1" height="1" fill="#000"/><rect x="291" y="62" width="2" height="1" fill="#8b0000"/><rect x="294" y="62" width="1" height="1" fill="#8b0000"/><rect x="279" y="63" width="1" height="1" fill="#000"/><rect x="280" y="63" width="6" height="1" fill="#f7f5f2"/><rect x="286" y="63" width="1" height="1" fill="#000"/><rect x="290" y="63" width="5" height="1" fill="#8b0000"/><rect x="279" y="64" width="1" height="1" fill="#000"/><rect x="280" y="64" width="6" height="1" fill="#f7f5f2"/><rect x="286" y="64" width="1" height="1" fill="#000"/><rect x="291" y="64" width="2" height="1" fill="#8b0000"/><rect x="279" y="65" width="1" height="1" fill="#000"/><rect x="280" y="65" width="6" height="1" fill="#f7f5f2"/><rect x="286" y="65" width="1" height="1" fill="#000"/><rect x="292" y="65" width="1" height="1" fill="#8b0000"/><rect x="280" y="66" width="1" height="1" fill="#000"/><rect x="281" y="66" width="4" height="1" fill="#f7f5f2"/><rect x="285" y="66" width="1" height="1" fill="#000"/><rect x="281" y="67" width="4" height="1" fill="#000"/><rect x="285" y="67" width="2" height="1" fill="#000080"/><rect x="285" y="68" width="3" height="1" fill="#000080"/><rect x="286" y="69" width="3" height="1" fill="#000080"/><rect x="287" y="70" width="2" height="1" fill="#000080"/>
 <!-- calendar --><rect x="312" y="56" width="13" height="1" fill="#1a6ee6"/><rect x="311" y="57" width="15" height="1" fill="#1a6ee6"/><rect x="311" y="58" width="15" height="1" fill="#1a6ee6"/><rect x="311" y="59" width="2" height="1" fill="#1a6ee6"/><rect x="313" y="59" width="11" height="1" fill="#fff"/><rect x="324" y="59" width="2" height="1" fill="#1a6ee6"/><rect x="311" y="60" width="2" height="1" fill="#1a6ee6"/><rect x="313" y="60" width="11" height="1" fill="#fff"/><rect x="324" y="60" width="2" height="1" fill="#1a6ee6"/><rect x="311" y="61" width="2" height="1" fill="#1a6ee6"/><rect x="313" y="61" width="2" height="1" fill="#fff"/><rect x="315" y="61" width="1" height="1" fill="#9aa6b8"/><rect x="316" y="61" width="1" height="1" fill="#fff"/><rect x="317" y="61" width="2" height="1" fill="#9aa6b8"/><rect x="319" y="61" width="1" height="1" fill="#fff"/><rect x="320" y="61" width="2" height="1" fill="#9aa6b8"/><rect x="322" y="61" width="1" height="1" fill="#fff"/><rect x="323" y="61" width="1" height="1" fill="#9aa6b8"/><rect x="324" y="61" width="2" height="1" fill="#1a6ee6"/><rect x="311" y="62" width="2" height="1" fill="#1a6ee6"/><rect x="313" y="62" width="11" height="1" fill="#fff"/><rect x="324" y="62" width="2" height="1" fill="#1a6ee6"/><rect x="311" y="63" width="2" height="1" fill="#1a6ee6"/><rect x="313" y="63" width="11" height="1" fill="#3a86ee"/><rect x="324" y="63" width="2" height="1" fill="#1a6ee6"/><rect x="311" y="64" width="2" height="1" fill="#1a6ee6"/><rect x="313" y="64" width="11" height="1" fill="#fff"/><rect x="324" y="64" width="2" height="1" fill="#1a6ee6"/><rect x="311" y="65" width="2" height="1" fill="#1a6ee6"/><rect x="313" y="65" width="1" height="1" fill="#b09090"/><rect x="314" y="65" width="1" height="1" fill="#9aa6b8"/><rect x="315" y="65" width="1" height="1" fill="#fff"/><rect x="316" y="65" width="2" height="1" fill="#9aa6b8"/><rect x="318" y="65" width="1" height="1" fill="#fff"/><rect x="319" y="65" width="2" height="1" fill="#9aa6b8"/><rect x="321" y="65" width="1" height="1" fill="#fff"/><rect x="322" y="65" width="1" height="1" fill="#9aa6b8"/><rect x="323" y="65" width="1" height="1" fill="#fff"/><rect x="324" y="65" width="2" height="1" fill="#1a6ee6"/><rect x="311" y="66" width="2" height="1" fill="#1a6ee6"/><rect x="313" y="66" width="11" height="1" fill="#fff"/><rect x="324" y="66" width="2" height="1" fill="#1a6ee6"/><rect x="311" y="67" width="2" height="1" fill="#1a6ee6"/><rect x="313" y="67" width="1" height="1" fill="#90b090"/><rect x="314" y="67" width="1" height="1" fill="#9aa6b8"/><rect x="315" y="67" width="1" height="1" fill="#fff"/><rect x="316" y="67" width="2" height="1" fill="#9aa6b8"/><rect x="318" y="67" width="1" height="1" fill="#fff"/><rect x="319" y="67" width="2" height="1" fill="#9aa6b8"/><rect x="321" y="67" width="1" height="1" fill="#fff"/><rect x="322" y="67" width="1" height="1" fill="#9aa6b8"/><rect x="323" y="67" width="1" height="1" fill="#fff"/><rect x="324" y="67" width="2" height="1" fill="#1a6ee6"/><rect x="311" y="68" width="2" height="1" fill="#1a6ee6"/><rect x="313" y="68" width="11" height="1" fill="#fff"/><rect x="324" y="68" width="2" height="1" fill="#1a6ee6"/><rect x="312" y="69" width="13" height="1" fill="#1a6ee6"/>
 <!-- X --><rect x="335" y="56" width="3" height="1" fill="#000"/><rect x="346" y="56" width="2" height="1" fill="#000"/><rect x="336" y="57" width="3" height="1" fill="#000"/><rect x="345" y="57" width="2" height="1" fill="#000"/><rect x="337" y="58" width="3" height="1" fill="#000"/><rect x="344" y="58" width="2" height="1" fill="#000"/><rect x="338" y="59" width="2" height="1" fill="#000"/><rect x="343" y="59" width="2" height="1" fill="#000"/><rect x="339" y="60" width="2" height="1" fill="#000"/><rect x="342" y="60" width="2" height="1" fill="#000"/><rect x="340" y="61" width="3" height="1" fill="#000"/><rect x="340" y="62" width="3" height="1" fill="#000"/><rect x="339" y="63" width="2" height="1" fill="#000"/><rect x="342" y="63" width="2" height="1" fill="#000"/><rect x="338" y="64" width="3" height="1" fill="#000"/><rect x="343" y="64" width="1" height="1" fill="#000"/><rect x="337" y="65" width="3" height="1" fill="#000"/><rect x="344" y="65" width="1" height="1" fill="#000"/><rect x="336" y="66" width="3" height="1" fill="#000"/><rect x="345" y="66" width="1" height="1" fill="#000"/><rect x="335" y="67" width="3" height="1" fill="#000"/><rect x="346" y="67" width="1" height="1" fill="#000"/><rect x="335" y="68" width="2" height="1" fill="#000"/><rect x="346" y="68" width="2" height="1" fill="#000"/>
</svg>
<div id="edtop" class="a"></div>
<div id="edl2" class="a"></div>
<div id="edit" class="a"></div>
<div id="botline" class="a"></div>
<div id="rline" class="a"></div>
<pre>      –.2,       1.11,          O,          O,
     –.29,        .44,          O,          O,
      –.2,        .43,          O,          O,
      .49,       –.74,          1,          O,
      .27,       –.96,          1,          O,
     –.28,       –.68,          O,          O,
     –.23,       –.26,          O,          O,
     –.34,       –.85,          O,          O,
      .43,       –.63,          1,          O,
     –.41,       –.11,          O,          O,
     –.27,        .O5,          O,          O,
      .65,      –1.13,          1,          O,
      .57,        .36,          1,          O,</pre>
<div id="cursor" class="a"></div>
<div id="sl1" class="a"></div>
<div id="stat" class="a mono">   h1O5<span class="u">_</span>bugs.raw [Fundamental] 444,O End</div>
<div id="sl2" class="a"></div>
<div id="msg" class="a mono">c:\docs<span class="u">_</span>Bayesian<span class="u">_</span>Statistics\h1O5<span class="u">_</span>bugs.raw written.</div>
<div id="sb" class="a">
 <div class="sbtn" style="top:0px"><svg style="left:0;top:0" width="13" height="14" viewBox="0 0 13 14"><path d="M2.5 9.5L6.5 5.5L10.5 9.5" fill="none" stroke="#4d6185" stroke-width="2.6"/></svg></div>
 <div class="sbtn" style="top:466px;height:13px;box-shadow:0 1px 0 #8eaaea"></div>
 <div class="sbtn" style="top:480px;height:17px"><svg style="left:0;top:0" width="13" height="14" viewBox="0 0 13 14"><path d="M2.5 5.5L6.5 9.5L10.5 5.5" fill="none" stroke="#4d6185" stroke-width="2.6"/></svg></div>
</div>
</body></html>
